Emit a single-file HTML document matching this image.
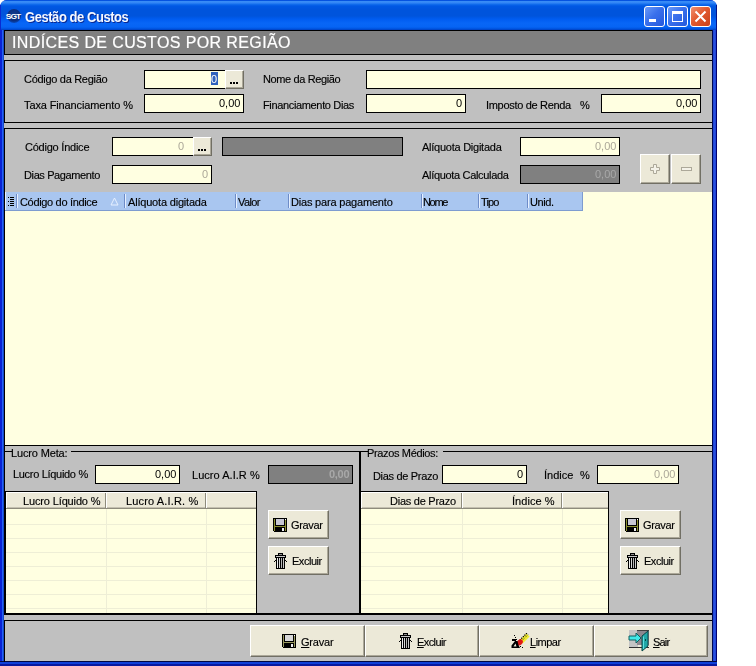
<!DOCTYPE html>
<html><head><meta charset="utf-8">
<style>
*{margin:0;padding:0;box-sizing:border-box}
html,body{width:756px;height:666px;overflow:hidden;background:#fff}
body{position:relative;font-family:"Liberation Sans",sans-serif;font-size:11px;color:#000;-webkit-font-smoothing:antialiased}
.t,.in span,.dis span{will-change:transform}
.a{position:absolute}
.t{position:absolute;white-space:nowrap;line-height:13px;font-size:11px;-webkit-text-stroke:0.15px #000}
.in{position:absolute;background:#FFFFE1;border:1px solid #000}
.in span,.dis span{position:absolute;right:3px;top:2px;line-height:13px;white-space:nowrap}
.dis{position:absolute;background:#808080;border:1px solid #000}
.btn{position:absolute;background:#ECE9D8;border-top:1px solid #fff;border-left:1px solid #fff;border-right:1px solid #716F64;border-bottom:1px solid #716F64;box-shadow:inset -1px -1px 0 #ACA899}
.blk{position:absolute;background:#000}
.dot{position:absolute;width:2px;height:2px;background:#000}
.gl{position:absolute;background:#EEEED6}
</style></head><body>
<div class="a" style="left:0;top:0;width:717px;height:666px;background:#0A2AD0;border-radius:7px 7px 0 0"></div>
<div class="a" style="left:0;top:0;width:717px;height:30px;border-radius:7px 7px 0 0;background:linear-gradient(#0553E0 0px,#0553E0 1px,#3A8EF6 1px,#3385F5 3px,#1470EE 4px,#0058E4 6px,#0054DC 10px,#0054DC 16px,#005CF0 19px,#0866F6 23px,#0664F4 27px,#0052DC 29px,#003DBE 30px)"></div>
<div class="a" style="left:0;top:30px;width:4px;height:636px;background:linear-gradient(90deg,#0A22D4 0,#0A22D4 2px,#2262F5 2px,#2262F5 3px,#1848C8 3px)"></div>
<div class="a" style="left:712px;top:30px;width:5px;height:636px;background:linear-gradient(90deg,#000850 0,#000850 1px,#1E40D0 1px,#2850E0 2.5px,#1E40D0 4px,#000070 4px)"></div>
<div class="a" style="left:0;top:661px;width:717px;height:5px;background:linear-gradient(#000840 0,#000840 1px,#1040D8 1px,#1040D8 3px,#0818A0 3px)"></div>
<div class="a" style="left:4px;top:30px;width:708px;height:631px;background:#C0C0C0"></div>
<div class="blk" style="left:4px;top:446px;width:1px;height:169px"></div>
<div class="blk" style="left:4px;top:661px;width:1px;height:1px"></div>
<div class="a" style="left:716px;top:5px;width:1px;height:25px;background:#00148C"></div>
<div class="a" style="left:0;top:5px;width:1px;height:25px;background:#0A2AD0"></div>
<div class="a" style="left:7px;top:9px;width:14px;height:14px;border-radius:50%;background:radial-gradient(circle at 50% 40%,#123C8C 0%,#0A2E80 55%,rgba(0,60,200,0) 100%)"></div>
<div class="a" style="left:6px;top:13px;font-size:8px;font-weight:bold;color:#fff;letter-spacing:-0.8px;line-height:8px;transform:scaleX(1.05)">SGT</div>
<div class="a" style="left:25px;top:9px;font-size:13px;font-weight:bold;color:#F4F8FF;letter-spacing:-0.45px;line-height:16px;text-shadow:1px 1px 0 #0A2890;transform:scaleY(1.1);transform-origin:0 0;will-change:transform">Gestão de Custos</div>
<div class="a" style="left:644px;top:6px;width:21px;height:21px;border:1px solid #fff;border-radius:3px;background:linear-gradient(135deg,#6A9AF8,#3A70EC 45%,#2458DC)"></div>
<div class="a" style="left:649px;top:19px;width:7px;height:3px;background:#fff"></div>
<div class="a" style="left:667px;top:6px;width:21px;height:21px;border:1px solid #fff;border-radius:3px;background:linear-gradient(135deg,#6A9AF8,#3A70EC 45%,#2458DC)"></div>
<div class="a" style="left:672px;top:11px;width:11px;height:11px;border:1px solid #fff;border-top-width:3px"></div>
<div class="a" style="left:690px;top:6px;width:21px;height:21px;border:1px solid #fff;border-radius:3px;background:linear-gradient(135deg,#F09070,#E25A30 45%,#C8401A)"></div>
<svg class="a" style="left:690px;top:6px" width="21" height="21"><path d="M5.5 5.5L15.5 15.5M15.5 5.5L5.5 15.5" stroke="#fff" stroke-width="2"/></svg>
<div class="a" style="left:4px;top:30px;width:708px;height:25px;background:#808080;border-top:1px solid #000;border-bottom:1px solid #000;border-left:1px solid #000"></div>
<div class="a" style="left:12px;top:33px;font-family:'Liberation Sans',sans-serif;font-size:16px;line-height:20px;color:#fff;letter-spacing:0.38px;-webkit-text-stroke:0.2px #fff;will-change:transform;white-space:nowrap">INDÍCES DE CUSTOS POR REGIÃO</div>
<div class="a" style="left:4px;top:60px;width:708px;height:63px;border-top:1px solid #000;border-bottom:1px solid #000;border-left:1px solid #000"></div>
<div class="t" style="left:24px;top:73px;letter-spacing:-0.30px">Código da Região</div>
<div class="t" style="left:24px;top:99px;letter-spacing:-0.12px">Taxa Financiamento %</div>
<div class="t" style="left:263px;top:73px;letter-spacing:-0.38px">Nome da Região</div>
<div class="t" style="left:263px;top:99px;letter-spacing:-0.35px">Financiamento Dias</div>
<div class="t" style="left:486px;top:99px;letter-spacing:-0.31px">Imposto de Renda</div>
<div class="t" style="left:580px;top:99px;letter-spacing:0.00px">%</div>
<div class="in" style="left:144px;top:70px;width:100px;height:19px"><div class="a" style="left:66px;top:1px;width:7px;height:13px;background:#2F62BC"></div><span style="right:26px;top:2px;color:#fff">0</span></div>
<div class="btn" style="left:225px;top:70px;width:19px;height:19px"></div>
<div class="dot" style="left:230px;top:82px"></div>
<div class="dot" style="left:233px;top:82px"></div>
<div class="dot" style="left:236px;top:82px"></div>
<div class="in" style="left:366px;top:70px;width:335px;height:19px"></div>
<div class="in" style="left:144px;top:94px;width:100px;height:19px"><span>0,00</span></div>
<div class="in" style="left:366px;top:94px;width:100px;height:19px"><span>0</span></div>
<div class="in" style="left:601px;top:94px;width:100px;height:19px"><span>0,00</span></div>
<div class="a" style="left:4px;top:128px;width:708px;height:318px;border-top:1px solid #000;border-bottom:1px solid #000;border-left:1px solid #000"></div>
<div class="t" style="left:25px;top:141px;letter-spacing:-0.23px">Código Índice</div>
<div class="t" style="left:24px;top:169px;letter-spacing:-0.38px">Dias Pagamento</div>
<div class="t" style="left:422px;top:141px;letter-spacing:-0.25px">Alíquota Digitada</div>
<div class="t" style="left:422px;top:169px;letter-spacing:-0.32px">Alíquota Calculada</div>
<div class="in" style="left:112px;top:137px;width:100px;height:19px"><span style="right:27px;color:#ACA899">0</span></div>
<div class="btn" style="left:193px;top:137px;width:19px;height:19px"></div>
<div class="dot" style="left:198px;top:149px"></div>
<div class="dot" style="left:201px;top:149px"></div>
<div class="dot" style="left:204px;top:149px"></div>
<div class="dis" style="left:222px;top:137px;width:181px;height:19px"></div>
<div class="in" style="left:112px;top:165px;width:100px;height:19px"><span style="color:#ACA899">0</span></div>
<div class="in" style="left:520px;top:137px;width:100px;height:19px"><span style="color:#ACA899">0,00</span></div>
<div class="dis" style="left:520px;top:165px;width:100px;height:19px"><span style="color:#A8A8A8">0,00</span></div>
<div class="btn" style="left:640px;top:154px;width:30px;height:30px"></div>
<div class="btn" style="left:671px;top:154px;width:30px;height:30px"></div>
<svg class="a" style="left:650px;top:164px" width="10" height="10"><path d="M3.5 0.5h3v3h3v3h-3v3h-3v-3h-3v-3h3z" fill="#F4F2E8" stroke="#ACA899" stroke-width="1"/></svg>
<svg class="a" style="left:681px;top:167px" width="11" height="4"><rect x="0.5" y="0.5" width="10" height="3" fill="#F4F2E8" stroke="#ACA899" stroke-width="1"/></svg>
<div class="a" style="left:5px;top:192px;width:707px;height:253px;background:#FFFFE1"></div>
<div class="a" style="left:5px;top:192px;width:578px;height:19px;background:#A9C6F0;border-right:1px solid #7E9CD0;border-bottom:1px solid #7E9CD0;box-shadow:inset 1px 0 0 #E6F0FF"></div>
<div class="a" style="left:8px;top:197px;width:1px;height:1px;background:#000"></div>
<div class="a" style="left:8px;top:201px;width:1px;height:1px;background:#000"></div>
<div class="a" style="left:8px;top:205px;width:1px;height:1px;background:#000"></div>
<div class="a" style="left:10px;top:197px;width:4px;height:1px;background:#000"></div>
<div class="a" style="left:10px;top:199px;width:4px;height:1px;background:#000"></div>
<div class="a" style="left:10px;top:201px;width:4px;height:1px;background:#000"></div>
<div class="a" style="left:10px;top:203px;width:4px;height:1px;background:#000"></div>
<div class="a" style="left:10px;top:205px;width:4px;height:1px;background:#000"></div>
<div class="a" style="left:16px;top:194px;width:1px;height:14px;background:#6E8CC8;box-shadow:1px 0 0 #E6F0FF"></div>
<div class="a" style="left:124px;top:194px;width:1px;height:14px;background:#6E8CC8;box-shadow:1px 0 0 #E6F0FF"></div>
<div class="a" style="left:235px;top:194px;width:1px;height:14px;background:#6E8CC8;box-shadow:1px 0 0 #E6F0FF"></div>
<div class="a" style="left:288px;top:194px;width:1px;height:14px;background:#6E8CC8;box-shadow:1px 0 0 #E6F0FF"></div>
<div class="a" style="left:421px;top:194px;width:1px;height:14px;background:#6E8CC8;box-shadow:1px 0 0 #E6F0FF"></div>
<div class="a" style="left:478px;top:194px;width:1px;height:14px;background:#6E8CC8;box-shadow:1px 0 0 #E6F0FF"></div>
<div class="a" style="left:527px;top:194px;width:1px;height:14px;background:#6E8CC8;box-shadow:1px 0 0 #E6F0FF"></div>
<div class="t" style="left:20px;top:196px;letter-spacing:-0.33px">Código do índice</div>
<div class="t" style="left:128px;top:196px;letter-spacing:-0.19px">Alíquota digitada</div>
<div class="t" style="left:238px;top:196px;letter-spacing:-0.60px">Valor</div>
<div class="t" style="left:291px;top:196px;letter-spacing:-0.19px">Dias para pagamento</div>
<div class="t" style="left:423px;top:196px;letter-spacing:-1.33px">Nome</div>
<div class="t" style="left:481px;top:196px;letter-spacing:-0.90px">Tipo</div>
<div class="t" style="left:530px;top:196px;letter-spacing:-0.42px">Unid.</div>
<svg class="a" style="left:110px;top:197px" width="9" height="9"><path d="M4.5 1L8 8H1z" fill="none" stroke="#E6F0FF" stroke-width="1"/></svg>
<div class="blk" style="left:4px;top:451px;width:8px;height:1px"></div>
<div class="blk" style="left:71px;top:451px;width:289px;height:1px"></div>
<div class="blk" style="left:359px;top:451px;width:2px;height:163px"></div>
<div class="blk" style="left:361px;top:451px;width:7px;height:1px"></div>
<div class="blk" style="left:443px;top:451px;width:269px;height:1px"></div>
<div class="t" style="left:11px;top:447px;letter-spacing:-0.15px">Lucro Meta:</div>
<div class="t" style="left:367px;top:447px;letter-spacing:-0.35px">Prazos Médios:</div>
<div class="t" style="left:13px;top:468px;letter-spacing:-0.31px">Lucro Líquido %</div>
<div class="t" style="left:192px;top:469px;letter-spacing:0.04px">Lucro A.I.R %</div>
<div class="t" style="left:373px;top:470px;letter-spacing:-0.32px">Dias de Prazo</div>
<div class="t" style="left:544px;top:469px;letter-spacing:0.00px">Índice</div>
<div class="t" style="left:580px;top:469px;letter-spacing:0.00px">%</div>
<div class="in" style="left:95px;top:465px;width:85px;height:19px"><span>0,00</span></div>
<div class="dis" style="left:268px;top:465px;width:85px;height:19px"><span style="color:#A8A8A8;font-weight:bold;letter-spacing:-0.3px">0,00</span></div>
<div class="in" style="left:442px;top:465px;width:85px;height:19px"><span>0</span></div>
<div class="in" style="left:597px;top:465px;width:82px;height:19px"><span style="color:#ACA899">0,00</span></div>
<div class="a" style="left:4px;top:491px;width:253px;height:124px;background:#FFFFE1;border-top:1px solid #000;border-right:1px solid #000;border-left:2px solid #000;border-bottom:2px solid #000"></div>
<div class="gl" style="left:6px;top:524px;width:250px;height:1px"></div>
<div class="gl" style="left:6px;top:538px;width:250px;height:1px"></div>
<div class="gl" style="left:6px;top:552px;width:250px;height:1px"></div>
<div class="gl" style="left:6px;top:566px;width:250px;height:1px"></div>
<div class="gl" style="left:6px;top:580px;width:250px;height:1px"></div>
<div class="gl" style="left:6px;top:594px;width:250px;height:1px"></div>
<div class="gl" style="left:6px;top:608px;width:250px;height:1px"></div>
<div class="gl" style="left:106px;top:509px;width:1px;height:104px"></div>
<div class="gl" style="left:206px;top:509px;width:1px;height:104px"></div>
<div class="a" style="left:6px;top:492px;width:250px;height:17px;background:#ECE9D8;border-bottom:1px solid #8E8B7C;box-shadow:inset 1px 1px 0 #fff, inset 0 -1px 0 #C4C0B0"></div>
<div class="a" style="left:105px;top:493px;width:1px;height:15px;background:#8E8B7C;box-shadow:1px 0 0 #fff"></div>
<div class="a" style="left:205px;top:493px;width:1px;height:15px;background:#8E8B7C;box-shadow:1px 0 0 #fff"></div>
<div class="t" style="left:23px;top:495px;letter-spacing:-0.14px">Lucro Líquido %</div>
<div class="t" style="left:126px;top:495px;letter-spacing:0.15px">Lucro A.I.R. %</div>
<div class="a" style="left:359px;top:491px;width:250px;height:124px;background:#FFFFE1;border-top:1px solid #000;border-right:1px solid #000;border-left:2px solid #000;border-bottom:2px solid #000"></div>
<div class="gl" style="left:361px;top:524px;width:247px;height:1px"></div>
<div class="gl" style="left:361px;top:538px;width:247px;height:1px"></div>
<div class="gl" style="left:361px;top:552px;width:247px;height:1px"></div>
<div class="gl" style="left:361px;top:566px;width:247px;height:1px"></div>
<div class="gl" style="left:361px;top:580px;width:247px;height:1px"></div>
<div class="gl" style="left:361px;top:594px;width:247px;height:1px"></div>
<div class="gl" style="left:361px;top:608px;width:247px;height:1px"></div>
<div class="gl" style="left:462px;top:509px;width:1px;height:104px"></div>
<div class="gl" style="left:562px;top:509px;width:1px;height:104px"></div>
<div class="a" style="left:361px;top:492px;width:247px;height:17px;background:#ECE9D8;border-bottom:1px solid #8E8B7C;box-shadow:inset 1px 1px 0 #fff, inset 0 -1px 0 #C4C0B0"></div>
<div class="a" style="left:461px;top:493px;width:1px;height:15px;background:#8E8B7C;box-shadow:1px 0 0 #fff"></div>
<div class="a" style="left:561px;top:493px;width:1px;height:15px;background:#8E8B7C;box-shadow:1px 0 0 #fff"></div>
<div class="t" style="left:390px;top:495px;letter-spacing:-0.25px">Dias de Prazo</div>
<div class="t" style="left:512px;top:495px;letter-spacing:0.04px">Índice %</div>
<div class="btn" style="left:268px;top:510px;width:61px;height:29px"></div>
<div class="btn" style="left:268px;top:546px;width:61px;height:29px"></div>
<svg class="a" style="left:273px;top:518px" width="14" height="14" shape-rendering="crispEdges"><rect x="0" y="0" width="14" height="14" fill="#000"/><rect x="1" y="1" width="1" height="12" fill="#8C9030"/><rect x="12" y="2" width="1" height="11" fill="#8C9030"/><rect x="12" y="1" width="1" height="1" fill="#fff"/><rect x="3" y="1" width="8" height="6" fill="#C8C8D4"/><rect x="2" y="8" width="10" height="1" fill="#8C9030"/><rect x="9" y="10" width="2" height="3" fill="#F0F0F0"/><rect x="0" y="13" width="1" height="1" fill="#ECE9D8"/></svg>
<svg class="a" style="left:274px;top:553px" width="13" height="16" shape-rendering="crispEdges"><rect x="4" y="0" width="5" height="3" fill="#000"/><rect x="5" y="1" width="3" height="1" fill="#909090"/><rect x="1" y="2" width="11" height="3" fill="#000"/><rect x="2" y="3" width="9" height="1" fill="#C8C8C8"/><rect x="2" y="5" width="9" height="11" fill="#000"/><rect x="3" y="5" width="1" height="10" fill="#F0F0F0"/><rect x="5" y="5" width="1" height="10" fill="#D8D8D8"/><rect x="7" y="5" width="1" height="10" fill="#B8B8B8"/><rect x="9" y="5" width="1" height="10" fill="#C8C8C8"/><rect x="0" y="8" width="1" height="1" fill="#000"/><rect x="1" y="7" width="1" height="1" fill="#000"/><rect x="12" y="8" width="1" height="1" fill="#000"/><rect x="11" y="7" width="1" height="1" fill="#000"/></svg>
<div class="t" style="left:291px;top:519px;letter-spacing:-0.36px">Gravar</div>
<div class="t" style="left:292px;top:555px;letter-spacing:-0.47px">Excluir</div>
<div class="btn" style="left:620px;top:510px;width:61px;height:29px"></div>
<div class="btn" style="left:620px;top:546px;width:61px;height:29px"></div>
<svg class="a" style="left:625px;top:518px" width="14" height="14" shape-rendering="crispEdges"><rect x="0" y="0" width="14" height="14" fill="#000"/><rect x="1" y="1" width="1" height="12" fill="#8C9030"/><rect x="12" y="2" width="1" height="11" fill="#8C9030"/><rect x="12" y="1" width="1" height="1" fill="#fff"/><rect x="3" y="1" width="8" height="6" fill="#C8C8D4"/><rect x="2" y="8" width="10" height="1" fill="#8C9030"/><rect x="9" y="10" width="2" height="3" fill="#F0F0F0"/><rect x="0" y="13" width="1" height="1" fill="#ECE9D8"/></svg>
<svg class="a" style="left:626px;top:553px" width="13" height="16" shape-rendering="crispEdges"><rect x="4" y="0" width="5" height="3" fill="#000"/><rect x="5" y="1" width="3" height="1" fill="#909090"/><rect x="1" y="2" width="11" height="3" fill="#000"/><rect x="2" y="3" width="9" height="1" fill="#C8C8C8"/><rect x="2" y="5" width="9" height="11" fill="#000"/><rect x="3" y="5" width="1" height="10" fill="#F0F0F0"/><rect x="5" y="5" width="1" height="10" fill="#D8D8D8"/><rect x="7" y="5" width="1" height="10" fill="#B8B8B8"/><rect x="9" y="5" width="1" height="10" fill="#C8C8C8"/><rect x="0" y="8" width="1" height="1" fill="#000"/><rect x="1" y="7" width="1" height="1" fill="#000"/><rect x="12" y="8" width="1" height="1" fill="#000"/><rect x="11" y="7" width="1" height="1" fill="#000"/></svg>
<div class="t" style="left:643px;top:519px;letter-spacing:-0.36px">Gravar</div>
<div class="t" style="left:644px;top:555px;letter-spacing:-0.47px">Excluir</div>
<div class="blk" style="left:4px;top:613px;width:708px;height:2px"></div>
<div class="a" style="left:4px;top:620px;width:708px;height:41px;border-top:1px solid #000;border-left:1px solid #000"></div>
<div class="btn" style="left:250px;top:625px;width:115px;height:32px"></div>
<div class="btn" style="left:365px;top:625px;width:114px;height:32px"></div>
<div class="btn" style="left:479px;top:625px;width:115px;height:32px"></div>
<div class="btn" style="left:594px;top:625px;width:114px;height:32px"></div>
<div class="t" style="left:301px;top:636px;letter-spacing:0.00px;letter-spacing:-0.2px"><u>G</u>ravar</div>
<div class="t" style="left:417px;top:636px;letter-spacing:0.00px;letter-spacing:-0.6px"><u>E</u>xcluir</div>
<div class="t" style="left:530px;top:636px;letter-spacing:0.00px;letter-spacing:-0.5px"><u>L</u>impar</div>
<div class="t" style="left:653px;top:636px;letter-spacing:0.00px;letter-spacing:-0.8px"><u>S</u>air</div>
<svg class="a" style="left:282px;top:634px" width="14" height="14" shape-rendering="crispEdges"><rect x="0" y="0" width="14" height="14" fill="#000"/><rect x="1" y="1" width="1" height="12" fill="#9A9A60"/><rect x="12" y="2" width="1" height="11" fill="#9A9A60"/><rect x="12" y="1" width="1" height="1" fill="#fff"/><rect x="3" y="1" width="8" height="6" fill="#D8D8D8"/><rect x="2" y="8" width="10" height="1" fill="#9A9A60"/><rect x="9" y="10" width="2" height="3" fill="#F0F0F0"/><rect x="0" y="13" width="1" height="1" fill="#ECE9D8"/></svg>
<svg class="a" style="left:399px;top:633px" width="13" height="16" shape-rendering="crispEdges"><rect x="4" y="0" width="5" height="3" fill="#000"/><rect x="5" y="1" width="3" height="1" fill="#909090"/><rect x="1" y="2" width="11" height="3" fill="#000"/><rect x="2" y="3" width="9" height="1" fill="#C8C8C8"/><rect x="2" y="5" width="9" height="11" fill="#000"/><rect x="3" y="5" width="1" height="10" fill="#F0F0F0"/><rect x="5" y="5" width="1" height="10" fill="#D8D8D8"/><rect x="7" y="5" width="1" height="10" fill="#B8B8B8"/><rect x="9" y="5" width="1" height="10" fill="#C8C8C8"/><rect x="0" y="8" width="1" height="1" fill="#000"/><rect x="1" y="7" width="1" height="1" fill="#000"/><rect x="12" y="8" width="1" height="1" fill="#000"/><rect x="11" y="7" width="1" height="1" fill="#000"/></svg>
<svg class="a" style="left:510px;top:633px" width="20" height="17"><path d="M16.4 0.4 L19.6 3.6 L12.6 10.6 L9.4 7.4 Z" fill="#F0EC30"/><path d="M9.8 7.2 L17 0" stroke="#000" stroke-width="1.2" stroke-dasharray="1.2 1"/><path d="M11 8.6 L18 1.6" stroke="#000" stroke-width="1" stroke-dasharray="1 1.2" opacity="0.7"/><ellipse cx="9.8" cy="9.4" rx="3.4" ry="2.6" transform="rotate(-45 9.8 9.4)" fill="#E01818"/><path d="M2 6 h4 v2 h-4 z" fill="#000"/><path d="M5 8 L1.5 12.5 L1.5 15 L10 15 L8.5 12 L7.5 8 Z M3.5 13.5 L6.5 13.5 L5.5 10.5 Z" fill="#000" fill-rule="evenodd"/><rect x="4" y="2" width="1" height="1" fill="#000"/><rect x="5" y="4" width="1" height="1" fill="#000"/><rect x="6" y="6" width="1" height="1" fill="#000"/><rect x="10" y="13" width="1" height="1" fill="#000"/><rect x="12" y="14" width="1" height="1" fill="#000"/></svg>
<svg class="a" style="left:628px;top:630px" width="23" height="23" shape-rendering="crispEdges"><rect x="1" y="0" width="9" height="17" fill="#C4C4C4"/><rect x="9" y="0" width="12" height="15" fill="#8C8890"/><rect x="9" y="0" width="12" height="1" fill="#404040"/><rect x="1" y="17" width="20" height="1" fill="#303030"/><path d="M1 6 h7 v-3 l5 5 l-5 5 v-3 h-7 z" fill="#40E8E8" stroke="#106060" stroke-width="1" shape-rendering="auto"/><path d="M14 6 L20 1 L20 16 L14 21 Z" fill="#20A8A8" stroke="#084848" stroke-width="1" shape-rendering="auto"/><path d="M15.5 6.5 L15.5 19" stroke="#60E0E0" stroke-width="1" shape-rendering="auto"/><rect x="17" y="9" width="1" height="2" fill="#084848"/></svg>
</body></html>
